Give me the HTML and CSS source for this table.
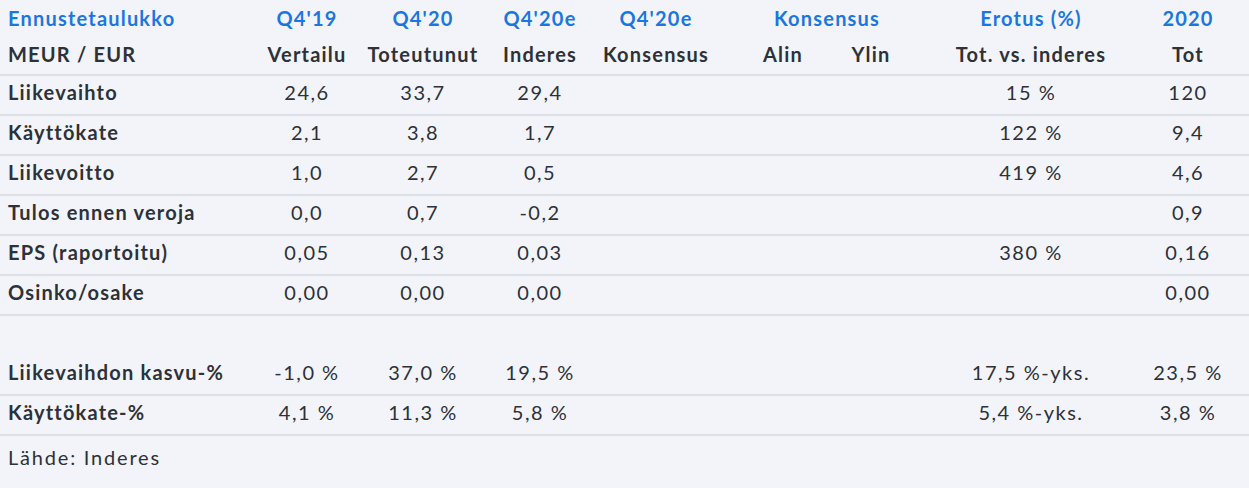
FILE: index.html
```html
<!DOCTYPE html>
<html lang="fi">
<head>
<meta charset="utf-8">
<title>Ennustetaulukko</title>
<link rel="stylesheet" href="styles.css">
</head>
<body>
<div class="table">
  <div class="row head1">
    <div class="lbl">Ennustetaulukko</div>
    <div class="c1">Q4'19</div>
    <div class="c2">Q4'20</div>
    <div class="c3">Q4'20e</div>
    <div class="c4">Q4'20e</div>
    <div class="cons">Konsensus</div>
    <div class="ero">Erotus (%)</div>
    <div class="tot">2020</div>
  </div>
  <div class="row head2 line">
    <div class="lbl">MEUR / EUR</div>
    <div class="c1">Vertailu</div>
    <div class="c2">Toteutunut</div>
    <div class="c3">Inderes</div>
    <div class="c4">Konsensus</div>
    <div class="alin">Alin</div>
    <div class="ylin">Ylin</div>
    <div class="ero">Tot. vs. inderes</div>
    <div class="tot">Tot</div>
  </div>
  <div class="row data line">
    <div class="lbl">Liikevaihto</div>
    <div class="c1">24,6</div><div class="c2">33,7</div><div class="c3">29,4</div>
    <div class="ero">15 %</div><div class="tot">120</div>
  </div>
  <div class="row data line">
    <div class="lbl">Käyttökate</div>
    <div class="c1">2,1</div><div class="c2">3,8</div><div class="c3">1,7</div>
    <div class="ero">122 %</div><div class="tot">9,4</div>
  </div>
  <div class="row data line">
    <div class="lbl">Liikevoitto</div>
    <div class="c1">1,0</div><div class="c2">2,7</div><div class="c3">0,5</div>
    <div class="ero">419 %</div><div class="tot">4,6</div>
  </div>
  <div class="row data line">
    <div class="lbl">Tulos ennen veroja</div>
    <div class="c1">0,0</div><div class="c2">0,7</div><div class="c3">-0,2</div>
    <div class="tot">0,9</div>
  </div>
  <div class="row data line">
    <div class="lbl">EPS (raportoitu)</div>
    <div class="c1">0,05</div><div class="c2">0,13</div><div class="c3">0,03</div>
    <div class="ero">380 %</div><div class="tot">0,16</div>
  </div>
  <div class="row data line">
    <div class="lbl">Osinko/osake</div>
    <div class="c1">0,00</div><div class="c2">0,00</div><div class="c3">0,00</div>
    <div class="tot">0,00</div>
  </div>
  <div class="row data spacer"></div>
  <div class="row data line">
    <div class="lbl">Liikevaihdon kasvu-%</div>
    <div class="c1">-1,0 %</div><div class="c2">37,0 %</div><div class="c3">19,5 %</div>
    <div class="ero">17,5 %-yks.</div><div class="tot">23,5 %</div>
  </div>
  <div class="row data line">
    <div class="lbl">Käyttökate-%</div>
    <div class="c1">4,1 %</div><div class="c2">11,3 %</div><div class="c3">5,8 %</div>
    <div class="ero">5,4 %-yks.</div><div class="tot">3,8 %</div>
  </div>
  <div class="source">Lähde: Inderes</div>
</div>
</body>
</html>
```

FILE: styles.css
```css
html, body {
  margin: 0;
  padding: 0;
  background: #f3f4f9;
}

body {
  font-family: Lato, "Liberation Sans", sans-serif;
  font-size: 20px;
  letter-spacing: 1.5px;
  color: #2d3138;
  width: 1249px;
  height: 488px;
  overflow: hidden;
}

.row {
  display: grid;
  grid-template-columns: 250px 114px 118px 116px 116px 25px 88px 88px 36px 160px 17px 120px 1fr;
  line-height: 24px;
  text-align: center;
  white-space: nowrap;
}

.line {
  border-bottom: 2px solid #dcdfe5;
}

.head1 {
  padding: 6px 0 7px;
  color: #1b77e0;
  font-weight: 700;
  letter-spacing: 1.2px;
}

.head2 {
  padding: 5px 0 8px;
  font-weight: 700;
  letter-spacing: 1.2px;
}

.data {
  padding: 4px 0 10px;
}

.spacer {
  height: 24px;
  border-bottom: 2px solid transparent;
}

.lbl {
  grid-column: 1;
  text-align: left;
  padding-left: 8px;
  font-weight: 700;
  letter-spacing: 1.2px;
}

.c1 { grid-column: 2; }
.c2 { grid-column: 3; }
.c3 { grid-column: 4; }
.c4 { grid-column: 5; }
.cons { grid-column: 7 / 9; }
.alin { grid-column: 7; }
.ylin { grid-column: 8; }
.ero { grid-column: 10; }
.tot { grid-column: 12; }

.source {
  padding: 9px 0 0 8px;
  line-height: 24px;
  letter-spacing: 1.8px;
}
```
